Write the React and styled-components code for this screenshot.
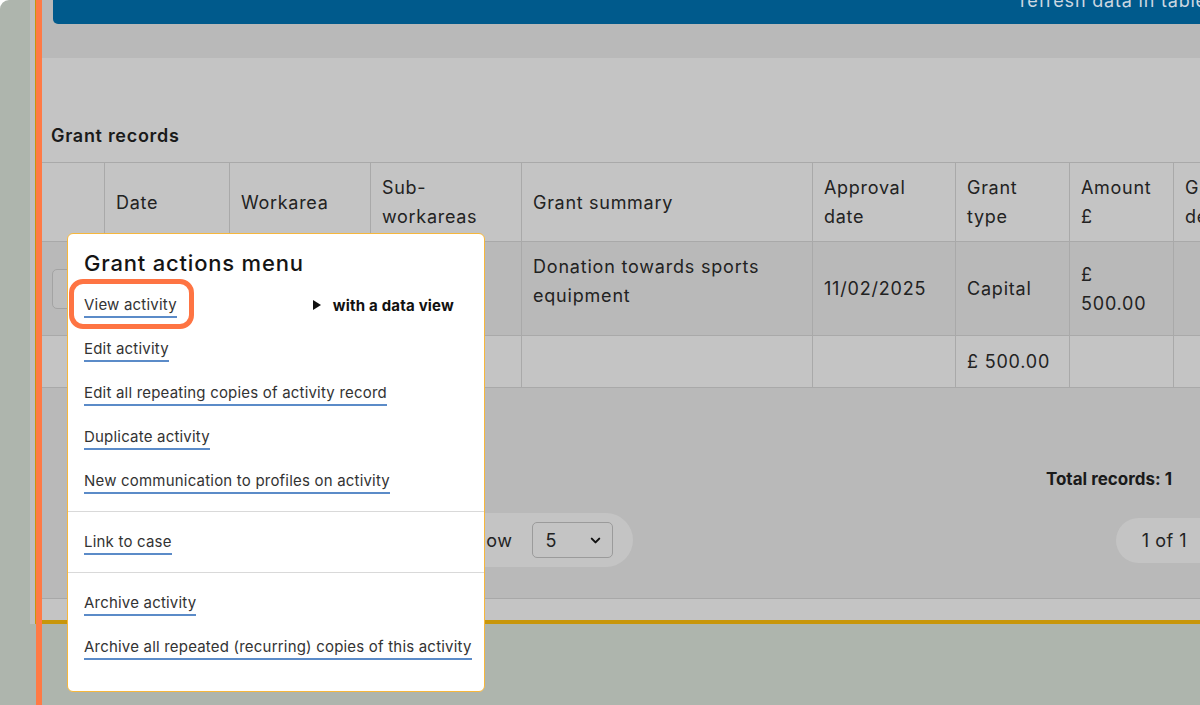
import styled, { createGlobalStyle } from "styled-components";
import { ChevronDown } from "lucide-react";

const GlobalStyle = createGlobalStyle`
  html, body {
    margin: 0;
    padding: 0;
    background: #ffffff;
  }
  body {
    font-family: Inter, "Noto Sans", Arial, sans-serif;
    color: #1f1f1f;
  }
  * {
    box-sizing: border-box;
  }
`;

const Screen = styled.div`
  position: relative;
  width: 1200px;
  height: 705px;
  overflow: hidden;
  display: flex;
  align-items: flex-start;
  background: #aeb5ad;
  border-top-left-radius: 9px;
`;

const Frame = styled.div`
  flex: none;
  width: 1250px;
  height: 624px;
  margin-left: 30px;
  padding-left: 5px;
  background: #bfbfbf;
`;

const Panel = styled.div`
  height: 100%;
  display: flex;
  flex-direction: column;
  background: #c4c4c4;
  border-left: 1px solid #c8960a;
  border-bottom: 4px solid #c8960a;
`;

const TopBand = styled.div`
  flex: none;
  height: 58px;
  padding-left: 17px;
  background: #b9b9b9;
`;

const RefreshBar = styled.div`
  height: 24px;
  display: flex;
  align-items: flex-start;
  padding-left: 967px;
  overflow: hidden;
  background: #005a8c;
  border-bottom-left-radius: 5px;
`;

const RefreshText = styled.span`
  margin-top: -10px;
  font-size: 18px;
  line-height: 22px;
  letter-spacing: 0.8px;
  white-space: nowrap;
  color: #cbd7e1;
`;

const SectionTitle = styled.h2`
  margin: 66px 0 14px 15px;
  font-size: 18px;
  line-height: 24px;
  font-weight: 600;
  letter-spacing: 0.7px;
  color: #1a1a1a;
`;

const Table = styled.table`
  flex: none;
  width: 1267px;
  border-collapse: collapse;
  table-layout: fixed;
`;

const HeadCell = styled.th`
  padding: 10px 11px;
  border: 1px solid #a9a9a9;
  text-align: left;
  vertical-align: middle;
  font-size: 18px;
  line-height: 29px;
  font-weight: 400;
  letter-spacing: 0.7px;
  color: #222;
`;

const Row = styled.tr`
  background: ${(p) => (p.$shaded ? "#b9b9b9" : "#c4c4c4")};
  height: ${(p) => p.$height}px;
`;

const Cell = styled.td`
  padding: ${(p) => (p.$top ? "10px" : "11px")} 11px 11px ${(p) => (p.$first ? 15 : 11)}px;
  border: 1px solid #a9a9a9;
  vertical-align: ${(p) => (p.$top ? "top" : "middle")};
  font-size: 18px;
  line-height: 29px;
  letter-spacing: 0.8px;
  color: #222;
`;

const RowButton = styled.div`
  width: 46px;
  height: 40px;
  border: 1px solid #a3a3a3;
  border-radius: 5px;
  background: #bdbdbd;
`;

const Footer = styled.div`
  flex: 1;
  display: flex;
  flex-direction: column;
  padding-top: 79px;
  background: #b9b9b9;
  border-bottom: 1px solid #a8a8a8;
`;

const TotalRecords = styled.div`
  align-self: flex-end;
  margin-right: 108px;
  font-size: 17px;
  line-height: 24px;
  font-weight: 700;
  color: #1a1a1a;
`;

const PagerRow = styled.div`
  display: flex;
  align-items: center;
  justify-content: space-between;
  margin-top: 22px;
  padding: 0 13px 0 403px;
`;

const Pill = styled.div`
  display: flex;
  align-items: center;
  gap: 20px;
  height: ${(p) => p.$h}px;
  padding: ${(p) => p.$pad};
  border-radius: 28px;
  background: #c4c4c4;
  font-size: 18px;
  letter-spacing: 0.5px;
  color: #222;
`;

const SelectBox = styled.div`
  width: 81px;
  height: 36px;
  display: flex;
  align-items: center;
  justify-content: space-between;
  padding: 0 9px 0 12px;
  border: 1px solid #9b9b9b;
  border-radius: 5px;
  font-size: 18px;
  color: #222;
`;

const BottomStrip = styled.div`
  flex: none;
  height: 21px;
  background: #c4c4c4;
`;

const GuideLine = styled.div`
  position: absolute;
  left: 36px;
  top: 0;
  width: 6px;
  height: 705px;
  background: #ff7a45;
`;

const Menu = styled.div`
  position: absolute;
  left: 67px;
  top: 233px;
  width: 418px;
  padding: 15px 0 14px;
  background: #ffffff;
  border: 1px solid #f6b73c;
  border-radius: 6px;
`;

const MenuTitle = styled.div`
  margin: 0 0 6px;
  padding: 0 16px;
  font-size: 22px;
  line-height: 28px;
  font-weight: 500;
  letter-spacing: 0.8px;
  color: #141414;
`;

const MenuGroup = styled.div`
  padding: ${(p) => (p.$first ? "0 0 8px" : "8px 0")};
  border-top: ${(p) => (p.$first ? "none" : "1px solid #d9d9d9")};
`;

const MenuItem = styled.div`
  height: 44px;
  display: flex;
  align-items: center;
  padding: 0 30px 0 16px;
  white-space: nowrap;
`;

const MenuLink = styled.a`
  display: inline-block;
  padding: 2px 0 1px;
  font-size: 15px;
  line-height: 20px;
  letter-spacing: 0.2px;
  color: #333;
  text-decoration: none;
  border-bottom: 2px solid #5b8bc8;
`;

const Note = styled.span`
  margin-left: auto;
  display: flex;
  align-items: center;
  gap: 12px;
  font-size: 15px;
  font-weight: 700;
  letter-spacing: 0.2px;
  color: #111;
`;

const Highlight = styled.div`
  position: absolute;
  left: 69px;
  top: 279px;
  width: 125px;
  height: 50px;
  border: 5px solid #fe7443;
  border-radius: 14px;
`;

const columns = [68, 125, 141, 151, 291, 143, 114, 104, 130];

const groups = [
  [
    "View activity",
    "Edit activity",
    "Edit all repeating copies of activity record",
    "Duplicate activity",
    "New communication to profiles on activity",
  ],
  ["Link to case"],
  ["Archive activity", "Archive all repeated (recurring) copies of this activity"],
];

function App() {
  return (
    <>
      <GlobalStyle />
      <Screen>
        <Frame>
          <Panel>
            <TopBand>
              <RefreshBar>
                <RefreshText>refresh data in table</RefreshText>
              </RefreshBar>
            </TopBand>
            <SectionTitle>Grant records</SectionTitle>
            <Table>
              <colgroup>
                {columns.map((w, i) => (
                  <col key={i} style={{ width: w }} />
                ))}
              </colgroup>
              <thead>
                <tr>
                  <HeadCell />
                  <HeadCell>Date</HeadCell>
                  <HeadCell>Workarea</HeadCell>
                  <HeadCell>
                    Sub-
                    <br />
                    workareas
                  </HeadCell>
                  <HeadCell>Grant summary</HeadCell>
                  <HeadCell>
                    Approval
                    <br />
                    date
                  </HeadCell>
                  <HeadCell>
                    Grant
                    <br />
                    type
                  </HeadCell>
                  <HeadCell>
                    Amount
                    <br />£
                  </HeadCell>
                  <HeadCell>
                    Grant
                    <br />
                    description
                  </HeadCell>
                </tr>
              </thead>
              <tbody>
                <Row $shaded $height={94}>
                  <Cell $first>
                    <RowButton />
                  </Cell>
                  <Cell />
                  <Cell />
                  <Cell />
                  <Cell $top>Donation towards sports equipment</Cell>
                  <Cell>11/02/2025</Cell>
                  <Cell>Capital</Cell>
                  <Cell>
                    £
                    <br />
                    500.00
                  </Cell>
                  <Cell />
                </Row>
                <Row $height={52}>
                  <Cell $first />
                  <Cell />
                  <Cell />
                  <Cell />
                  <Cell />
                  <Cell />
                  <Cell>£ 500.00</Cell>
                  <Cell />
                  <Cell />
                </Row>
              </tbody>
            </Table>
            <Footer>
              <TotalRecords>Total records: 1</TotalRecords>
              <PagerRow>
                <Pill $h={54} $pad="0 20px 0 24px">
                  <span>Show</span>
                  <SelectBox>
                    <span>5</span>
                    <ChevronDown size={15} strokeWidth={3.2} color="#111" />
                  </SelectBox>
                </Pill>
                <Pill $h={45} $pad="0 80px 0 26px">
                  <span>1 of 1</span>
                </Pill>
              </PagerRow>
            </Footer>
            <BottomStrip />
          </Panel>
        </Frame>
        <GuideLine />
        <Menu>
          <MenuTitle>Grant actions menu</MenuTitle>
          {groups.map((items, gi) => (
            <MenuGroup key={gi} $first={gi === 0}>
              {items.map((label, i) => (
                <MenuItem key={label}>
                  <MenuLink href="#">{label}</MenuLink>
                  {gi === 0 && i === 0 && (
                    <Note>
                      <svg width="8" height="10" viewBox="0 0 8 10">
                        <polygon points="0,0 8,5 0,10" fill="#111" />
                      </svg>
                      with a data view
                    </Note>
                  )}
                </MenuItem>
              ))}
            </MenuGroup>
          ))}
        </Menu>
        <Highlight />
      </Screen>
    </>
  );
}

export default App;
